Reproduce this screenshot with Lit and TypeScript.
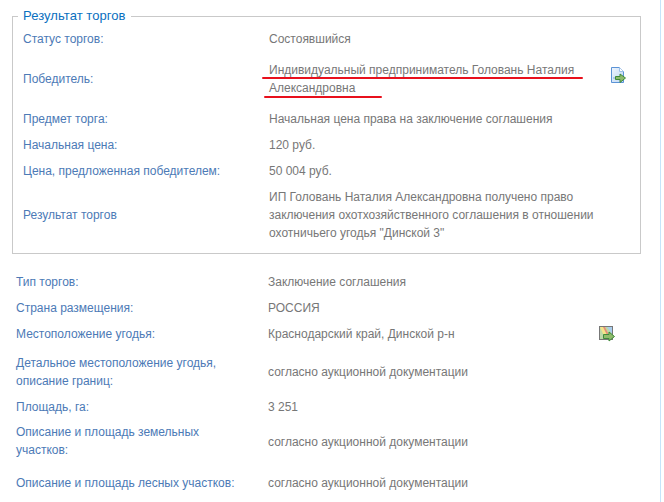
import { LitElement, html, css } from "lit";
import { customElement } from "lit/decorators.js";

const docIcon = html`<svg class="ico" width="16" height="17" viewBox="0 0 16 17">
  <defs><linearGradient id="docFill" x1="0" y1="0" x2="1" y2="1"><stop offset="0" stop-color="#eef5fd"/><stop offset="1" stop-color="#bcd6f4"/></linearGradient></defs>
  <path d="M1.5 .5H9.5L13.5 4.5V15.5H1.5Z" fill="url(#docFill)" stroke="#5b93d6"/>
  <path d="M9.5 .5V4.5H13.5" fill="#fff" stroke="#9cc0e8"/>
  <path d="M3 11H6" stroke="#7aa7dc"/>
  <path d="M5.5 9.5H10V7L15.5 11L10 15.5V12.5H5.5Z" fill="#8fbb6c" stroke="#3f8a3a"/>
</svg>`;

const mapIcon = html`<svg class="ico" width="16" height="16" viewBox="0 0 16 16">
  <rect x=".5" y=".5" width="13" height="13" fill="#bcd8a8" stroke="#777"/>
  <path d="M1 1H6L10 10H5Z" fill="#f3e58a"/>
  <path d="M4 1H6L12 13H10Z" fill="#e58f7a"/>
  <path d="M8 1H13V8Z" fill="#a9cdec"/>
  <path d="M4.5 8.5H10V6L15.5 10.5L10 15V12.5H4.5Z" fill="#8fbb6c" stroke="#3f8a3a"/>
</svg>`;

@customElement("app-root")
export class AppRoot extends LitElement {
  static styles = css`
    :host {
      display: block;
      width: 664px;
      height: 502px;
      overflow: hidden;
      background: #fff;
      font-family: "Liberation Sans", Arial, sans-serif;
      font-size: 12px;
      line-height: 18px;
      position: relative;
    }
    .page {
      width: 661px;
      height: 502px;
      box-sizing: border-box;
      border-right: 1px solid #c5e5fb;
      padding: 8px 0 0 12px;
    }
    fieldset {
      width: 629px;
      height: 246px;
      box-sizing: border-box;
      margin: 0;
      padding: 2px 10px 0;
      border: 1px solid #c9c9c9;
    }
    legend {
      padding: 0 5px;
      margin-left: -5px;
      color: #0a70c0;
      font-size: 13px;
      line-height: 16px;
      letter-spacing: 0.06px;
    }
    .rows { display: flex; flex-direction: column; }
    .plain { margin: 15px 0 0 4px; }
    .row {
      display: grid;
      grid-template-columns: 246px 330px 1fr;
      align-items: center;
      min-height: 26px;
      box-sizing: border-box;
    }
    .plain .row { grid-template-columns: 252px 331px 1fr; }
    .l { color: #4c7ab6; }
    .v { color: #777; }
    .plain .l { padding-right: 30px; }
    .h54 { min-height: 54px; }
    .h62 { min-height: 62px; }
    .h47 { min-height: 47px; padding-top: 3px; }
    .h44 { min-height: 44px; }
    .h44 .l { margin-bottom: 2px; }
    .h36 { min-height: 36px; padding-top: 2px; }
    .ico { display: block; }
    .box-ico { margin: 0 0 8px 11px; }
    .red {
      position: absolute;
      height: 2px;
      background: #e8101c;
      border-radius: 1px;
    }
    .r1 { left: 262px; top: 77px; width: 321px; }
    .r2 { left: 264px; top: 96px; width: 118px; }
  `;

  render() {
    return html`<div class="page">
      <fieldset>
        <legend>Результат торгов</legend>
        <div class="rows">
          <div class="row"><div class="l">Статус торгов:</div><div class="v">Состоявшийся</div></div>
          <div class="row h54"><div class="l">Победитель:</div><div class="v">Индивидуальный предприниматель Головань Наталия Александровна</div><div class="box-ico">${docIcon}</div></div>
          <div class="row"><div class="l">Предмет торга:</div><div class="v">Начальная цена права на заключение соглашения</div></div>
          <div class="row"><div class="l">Начальная цена:</div><div class="v">120 руб.</div></div>
          <div class="row"><div class="l">Цена, предложенная победителем:</div><div class="v">50 004 руб.</div></div>
          <div class="row h62"><div class="l">Результат торгов</div><div class="v">ИП Головань Наталия Александровна получено право заключения охотхозяйственного соглашения в отношении охотничьего угодья "Динской 3"</div></div>
        </div>
      </fieldset>
      <div class="rows plain">
        <div class="row"><div class="l">Тип торгов:</div><div class="v">Заключение соглашения</div></div>
        <div class="row"><div class="l">Страна размещения:</div><div class="v">РОССИЯ</div></div>
        <div class="row"><div class="l">Местоположение угодья:</div><div class="v">Краснодарский край, Динской р-н</div><div>${mapIcon}</div></div>
        <div class="row h47"><div class="l">Детальное местоположение угодья, описание границ:</div><div class="v">согласно аукционной документации</div></div>
        <div class="row"><div class="l">Площадь, га:</div><div class="v">3 251</div></div>
        <div class="row h44"><div class="l">Описание и площадь земельных участков:</div><div class="v">согласно аукционной документации</div></div>
        <div class="row h36"><div class="l">Описание и площадь лесных участков:</div><div class="v">согласно аукционной документации</div></div>
      </div>
      <div class="red r1"></div>
      <div class="red r2"></div>
    </div>`;
  }
}
